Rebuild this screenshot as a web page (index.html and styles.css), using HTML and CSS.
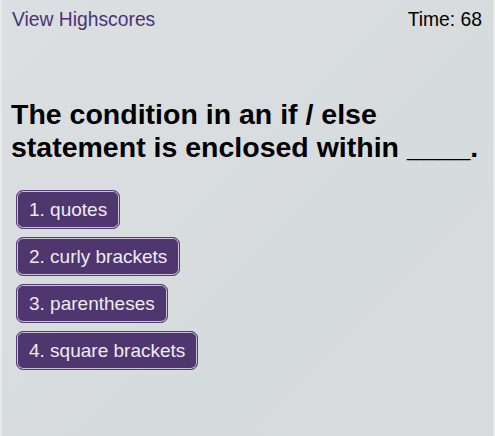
FILE: index.html
```html
<!DOCTYPE html>
<html>
<head>
<meta charset="utf-8">
<link rel="stylesheet" href="styles.css">
</head>
<body>
<div class="page">
  <header class="topbar">
    <a class="highscores" href="#">View Highscores</a>
    <div class="timer">Time: 68</div>
  </header>
  <main class="quiz">
    <h1 class="question">The condition in an if / else statement is enclosed within ____.</h1>
    <div class="choices">
      <button class="choice">1. quotes</button>
      <button class="choice">2. curly brackets</button>
      <button class="choice">3. parentheses</button>
      <button class="choice">4. square brackets</button>
    </div>
  </main>
</div>
</body>
</html>
```
FILE: styles.css
```css
html, body {
  margin: 0;
  padding: 0;
  height: 100%;
}
body {
  background: #d9dddf;
  font-family: "Liberation Sans", Arial, sans-serif;
}
.page {
  height: 100%;
  box-sizing: border-box;
  border-left: 2px solid #e8e9ea;
  border-right: 2px solid #e8e9ea;
  background: linear-gradient(135deg, #dcdfe1 0%, #d6dbdd 60%, #d9dcde 100%);
}
.topbar {
  display: flex;
  justify-content: space-between;
  align-items: baseline;
  padding: 9px 11px 0 10px;
}
.highscores {
  color: #4b3277;
  text-decoration: none;
  font-size: 19.3px;
}
.timer {
  color: #000;
  font-size: 19.3px;
}
.quiz {
  padding: 0 0 0 9px;
}
.question {
  margin: 67px 0 0 0;
  font-size: 28.5px;
  line-height: 33px;
  font-weight: bold;
  color: #000;
}
.choices {
  display: flex;
  flex-direction: column;
  align-items: flex-start;
  gap: 8px;
  margin-top: 26px;
  padding-left: 5px;
}
.choice {
  font-family: "Liberation Sans", Arial, sans-serif;
  font-size: 19px;
  color: #efecf3;
  background: #4f366f;
  border: 1px solid #553c77;
  box-shadow: inset 0 0 0 1px #cbc2d7;
  border-radius: 7px;
  padding: 0 12px;
  height: 39px;
  cursor: pointer;
}
```
